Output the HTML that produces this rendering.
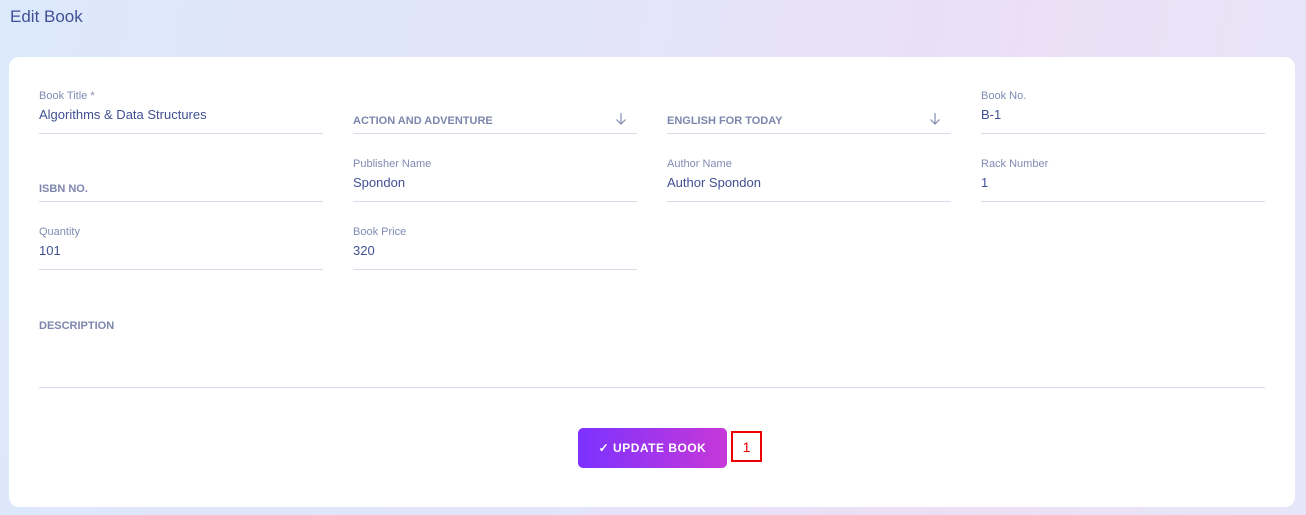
<!DOCTYPE html>
<html><head><style>
*{margin:0;padding:0;box-sizing:border-box}
body{width:1306px;height:515px;overflow:hidden;font-family:"Liberation Sans",sans-serif;
background:linear-gradient(100deg,#dce8fb 0%,#e3e4fa 45%,#eddff5 75%,#e6e6f8 100%);position:relative}
h1{position:absolute;left:10px;top:7px;font-size:17px;font-weight:normal;color:#415094}
.card{position:absolute;left:9px;top:57px;width:1286px;height:450px;background:#fff;border-radius:10px}
.f{position:absolute;width:284px;height:46px;border-bottom:1px solid #d9d9ea}
.l{position:absolute;top:2px;font-size:11px;color:#828bb2}
.v{position:absolute;top:19px;font-size:13px;color:#415094}
.p{position:absolute;top:27px;font-size:11px;color:#7d86ad;font-weight:600}
.arr{position:absolute;right:10px;top:24px}
.btn{position:absolute;left:569px;top:371px;width:149px;height:40px;border-radius:5px;
background:linear-gradient(90deg,#7c32ff,#c738d8);color:#fff;font-size:12px;font-weight:bold;letter-spacing:.5px;
display:flex;align-items:center;justify-content:center}
.badge{position:absolute;left:722px;top:374px;width:31px;height:31px;border:2px solid #e00;color:#e00;font-size:14px;
display:flex;align-items:center;justify-content:center}
</style></head><body>
<h1>Edit Book</h1>
<div class="card">
<div class="f" style="left:30px;top:31px"><div class="l">Book Title *</div><div class="v">Algorithms &amp; Data Structures</div></div>
<div class="f" style="left:344px;top:31px"><div class="p">ACTION AND ADVENTURE</div><svg class="arr" width="12" height="14" viewBox="0 0 12 14"><path d="M6 1V12M1.5 7.5L6 12L10.5 7.5" fill="none" stroke="#828bb2" stroke-width="1.2"/></svg></div>
<div class="f" style="left:658px;top:31px"><div class="p">ENGLISH FOR TODAY</div><svg class="arr" width="12" height="14" viewBox="0 0 12 14"><path d="M6 1V12M1.5 7.5L6 12L10.5 7.5" fill="none" stroke="#828bb2" stroke-width="1.2"/></svg></div>
<div class="f" style="left:972px;top:31px"><div class="l">Book No.</div><div class="v">B-1</div></div>
<div class="f" style="left:30px;top:99px"><div class="p">ISBN NO.</div></div>
<div class="f" style="left:344px;top:99px"><div class="l">Publisher Name</div><div class="v">Spondon</div></div>
<div class="f" style="left:658px;top:99px"><div class="l">Author Name</div><div class="v">Author Spondon</div></div>
<div class="f" style="left:972px;top:99px"><div class="l">Rack Number</div><div class="v">1</div></div>
<div class="f" style="left:30px;top:167px"><div class="l">Quantity</div><div class="v">101</div></div>
<div class="f" style="left:344px;top:167px"><div class="l">Book Price</div><div class="v">320</div></div>
<div class="f" style="left:30px;top:262px;width:1226px;height:69px"><div class="p" style="top:1px">DESCRIPTION</div></div>
<div class="btn">✓&nbsp;UPDATE BOOK</div>
<div class="badge">1</div>
</div>
</body></html>
